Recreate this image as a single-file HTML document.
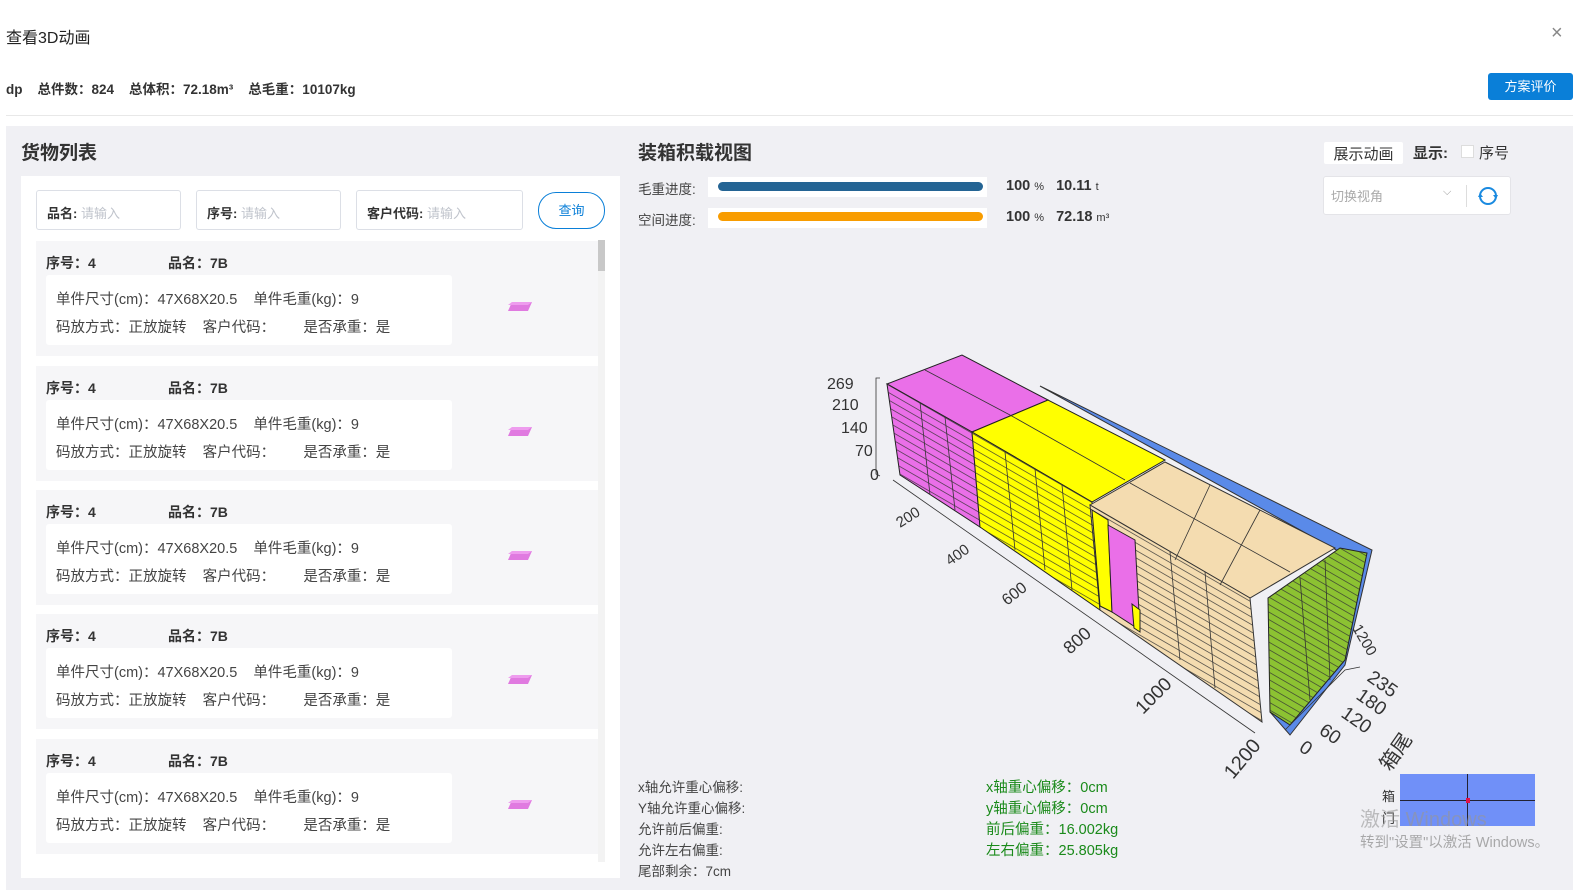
<!DOCTYPE html>
<html><head><meta charset="utf-8"><style>
*{margin:0;padding:0;box-sizing:border-box}
body{width:1573px;height:894px;background:#fff;font-family:"Liberation Sans","Noto Sans CJK SC",sans-serif;color:#333;position:relative;overflow:hidden}
.a{position:absolute;white-space:nowrap}
.b{font-weight:bold}
.inp{position:absolute;top:190px;height:40px;border:1px solid #dcdfe6;border-radius:3px;background:#fff;font-size:13px;font-weight:bold;padding:12px 0 0 10px;color:#333}
.inp span{color:#c0c4cc;font-weight:normal}
.item{position:absolute;left:36px;width:562px;height:115px;background:#f6f6f8}
.item .h{position:absolute;top:12px;font-size:14px;font-weight:bold;color:#333}
.item .w{position:absolute;left:10px;top:34px;width:406px;height:70px;background:#fff;border-radius:3px;font-size:14.5px;color:#444}
.item .w div{position:absolute;left:10px}
.item svg{position:absolute;left:472px;top:58px}
.lab{font-size:13.5px;color:#444}
.grn{font-size:14.5px;color:#1a8a1a}
</style></head><body>
<div class="a" style="left:6px;top:24px;font-size:16px;color:#222">查看3D动画</div>
<div class="a" style="left:1551px;top:22px;font-size:20px;color:#888">×</div>
<div class="a b" style="left:6px;top:78px;font-size:13.5px;color:#333">dp&nbsp;&nbsp;&nbsp;&nbsp;总件数：824&nbsp;&nbsp;&nbsp;&nbsp;总体积：72.18m³&nbsp;&nbsp;&nbsp;&nbsp;总毛重：10107kg</div>
<div class="a" style="left:1488px;top:73px;width:85px;height:27px;background:#0a7fd8;border-radius:3px;color:#fff;font-size:13px;text-align:center;line-height:27px">方案评价</div>
<div class="a" style="left:6px;top:115px;width:1567px;height:1px;background:#e8e8e8"></div>
<div class="a" style="left:6px;top:126px;width:1567px;height:764px;background:#f0f0f4"></div>
<div class="a b" style="left:21px;top:138px;font-size:19px;color:#333">货物列表</div>
<div class="a" style="left:21px;top:176px;width:599px;height:702px;background:#fff"></div>
<div class="inp" style="left:36px;width:145px">品名: <span>请输入</span></div>
<div class="inp" style="left:196px;width:145px">序号: <span>请输入</span></div>
<div class="inp" style="left:356px;width:167px">客户代码: <span>请输入</span></div>
<div class="a" style="left:538px;top:192px;width:67px;height:37px;border:1px solid #0a7fd8;border-radius:18px;color:#0a7fd8;font-size:13px;text-align:center;line-height:35px">查询</div>
<div class="a" style="left:598px;top:240px;width:7px;height:622px;background:#f3f3f3"></div>
<div class="a" style="left:598px;top:240px;width:7px;height:31px;background:#c8c8c8"></div>
<div class="item" style="top:241px"><div class="h" style="left:10px">序号：4</div><div class="h" style="left:132px">品名：7B</div><div class="w"><div style="top:13px">单件尺寸(cm)：47X68X20.5&nbsp;&nbsp;&nbsp;&nbsp;单件毛重(kg)：9</div><div style="top:41px">码放方式：正放旋转&nbsp;&nbsp;&nbsp;&nbsp;客户代码：&nbsp;&nbsp;&nbsp;&nbsp;&nbsp;&nbsp;&nbsp;是否承重：是</div></div><svg width="24" height="14"><polygon points="4,3 24,3 20,12 0,12" fill="#e07ae0"/><polygon points="0,6 20,6 24,3 4,3" fill="#ee9cee"/></svg></div>
<div class="item" style="top:366px"><div class="h" style="left:10px">序号：4</div><div class="h" style="left:132px">品名：7B</div><div class="w"><div style="top:13px">单件尺寸(cm)：47X68X20.5&nbsp;&nbsp;&nbsp;&nbsp;单件毛重(kg)：9</div><div style="top:41px">码放方式：正放旋转&nbsp;&nbsp;&nbsp;&nbsp;客户代码：&nbsp;&nbsp;&nbsp;&nbsp;&nbsp;&nbsp;&nbsp;是否承重：是</div></div><svg width="24" height="14"><polygon points="4,3 24,3 20,12 0,12" fill="#e07ae0"/><polygon points="0,6 20,6 24,3 4,3" fill="#ee9cee"/></svg></div>
<div class="item" style="top:490px"><div class="h" style="left:10px">序号：4</div><div class="h" style="left:132px">品名：7B</div><div class="w"><div style="top:13px">单件尺寸(cm)：47X68X20.5&nbsp;&nbsp;&nbsp;&nbsp;单件毛重(kg)：9</div><div style="top:41px">码放方式：正放旋转&nbsp;&nbsp;&nbsp;&nbsp;客户代码：&nbsp;&nbsp;&nbsp;&nbsp;&nbsp;&nbsp;&nbsp;是否承重：是</div></div><svg width="24" height="14"><polygon points="4,3 24,3 20,12 0,12" fill="#e07ae0"/><polygon points="0,6 20,6 24,3 4,3" fill="#ee9cee"/></svg></div>
<div class="item" style="top:614px"><div class="h" style="left:10px">序号：4</div><div class="h" style="left:132px">品名：7B</div><div class="w"><div style="top:13px">单件尺寸(cm)：47X68X20.5&nbsp;&nbsp;&nbsp;&nbsp;单件毛重(kg)：9</div><div style="top:41px">码放方式：正放旋转&nbsp;&nbsp;&nbsp;&nbsp;客户代码：&nbsp;&nbsp;&nbsp;&nbsp;&nbsp;&nbsp;&nbsp;是否承重：是</div></div><svg width="24" height="14"><polygon points="4,3 24,3 20,12 0,12" fill="#e07ae0"/><polygon points="0,6 20,6 24,3 4,3" fill="#ee9cee"/></svg></div>
<div class="item" style="top:739px"><div class="h" style="left:10px">序号：4</div><div class="h" style="left:132px">品名：7B</div><div class="w"><div style="top:13px">单件尺寸(cm)：47X68X20.5&nbsp;&nbsp;&nbsp;&nbsp;单件毛重(kg)：9</div><div style="top:41px">码放方式：正放旋转&nbsp;&nbsp;&nbsp;&nbsp;客户代码：&nbsp;&nbsp;&nbsp;&nbsp;&nbsp;&nbsp;&nbsp;是否承重：是</div></div><svg width="24" height="14"><polygon points="4,3 24,3 20,12 0,12" fill="#e07ae0"/><polygon points="0,6 20,6 24,3 4,3" fill="#ee9cee"/></svg></div>

<div class="a b" style="left:638px;top:138px;font-size:19px;color:#333">装箱积载视图</div>
<div class="a lab" style="left:638px;top:178px">毛重进度:</div>
<div class="a" style="left:708px;top:177px;width:279px;height:20px;background:#fff"></div>
<div class="a" style="left:718px;top:182px;width:265px;height:9px;background:#246494;border-radius:5px"></div>
<div class="a b" style="left:1006px;top:178px;font-size:14.5px">100 <span style="font-weight:normal;font-size:11px">%</span>&nbsp;&nbsp;&nbsp;10.11 <span style="font-weight:normal;font-size:11px">t</span></div>
<div class="a lab" style="left:638px;top:209px">空间进度:</div>
<div class="a" style="left:708px;top:208px;width:279px;height:20px;background:#fff"></div>
<div class="a" style="left:718px;top:212px;width:265px;height:9px;background:#f89c00;border-radius:5px"></div>
<div class="a b" style="left:1006px;top:209px;font-size:14.5px">100 <span style="font-weight:normal;font-size:11px">%</span>&nbsp;&nbsp;&nbsp;72.18 <span style="font-weight:normal;font-size:11px">m³</span></div>
<div class="a" style="left:1324px;top:142px;width:79px;height:22px;background:#fff;border-radius:2px;font-size:15px;text-align:center;line-height:26px;color:#333">展示动画</div>
<div class="a b" style="left:1413px;top:142px;font-size:15px">显示:</div>
<div class="a" style="left:1461px;top:145px;width:13px;height:13px;border:1px solid #ddd;background:#fff"></div>
<div class="a" style="left:1479px;top:142px;font-size:15px">序号</div>
<div class="a" style="left:1323px;top:176px;width:188px;height:39px;background:#fff;border:1px solid #e4e4e8;border-radius:3px"></div>
<div class="a" style="left:1331px;top:186px;font-size:13px;color:#aaa">切换视角</div>
<div class="a" style="left:1443px;top:186px;font-size:11px;color:#999">⌵</div>
<div class="a" style="left:1466px;top:185px;width:1px;height:22px;background:#ddd"></div>
<svg class="a" style="left:1477px;top:185px" width="22" height="22"><circle cx="11" cy="11" r="8" fill="none" stroke="#1a8ae0" stroke-width="2"/><polygon points="3,8 6,12 1,12" fill="#1a8ae0"/><polygon points="19,14 16,10 21,10" fill="#1a8ae0"/></svg>

<svg class="a" style="left:0;top:0" width="1573" height="894">
<defs>
<pattern id="hs" width="20" height="7.5" patternUnits="userSpaceOnUse" patternTransform="skewY(30)"><line x1="0" y1="7" x2="20" y2="7" stroke="#333" stroke-width="0.8"/></pattern>
</defs>
<polygon points="1040,386 1372,550 1345,665 1290,735 1270,712 1340,552" fill="#5a8ae8" stroke="#333" stroke-width="1"/>
<!-- magenta -->
<polygon points="887,384 962,355 1048,400 972,432" fill="#ea6fe8" stroke="#222"/>
<polygon points="887,384 972,432 980,527 900,475" fill="#ea6fe8" stroke="#222"/>
<polygon points="887,384 972,432 980,527 900,475" fill="url(#hs)"/>
<!-- yellow -->
<polygon points="972,432 1048,400 1165,460 1092,502" fill="#ffff00" stroke="#222"/>
<polygon points="972,432 1092,502 1100,610 980,527" fill="#ffff00" stroke="#222"/>
<polygon points="972,432 1092,502 1100,610 980,527" fill="url(#hs)"/>
<!-- tan -->
<polygon points="1090,505 1165,462 1335,548 1250,598" fill="#f4dcb0" stroke="#333"/>
<polygon points="1090,505 1250,598 1262,722 1100,610" fill="#f4dcb0" stroke="#333"/>
<polygon points="1090,505 1250,598 1262,722 1100,610" fill="url(#hs)"/>
<polygon points="1092,510 1108,520 1112,612 1100,606" fill="#ffff00" stroke="#222"/>
<polygon points="1108,525 1135,540 1140,630 1112,612" fill="#ea6fe8" stroke="#222"/>
<polygon points="1132,604 1140,610 1140,632 1134,628" fill="#ffff00" stroke="#222"/>
<!-- green -->
<polygon points="1268,598 1340,548 1367,553 1345,660 1290,725 1270,712" fill="#8cc232" stroke="#222"/>
<polygon points="1268,598 1340,548 1367,553 1345,660 1290,725 1270,712" fill="url(#hs)"/>
<g stroke="#333" stroke-width="0.8" fill="none">
<line x1="920" y1="402" x2="930" y2="495"/><line x1="945" y1="417" x2="955" y2="510"/>
<line x1="1005" y1="452" x2="1015" y2="550"/><line x1="1035" y1="469" x2="1045" y2="570"/><line x1="1062" y1="485" x2="1072" y2="590"/>
<line x1="1170" y1="552" x2="1180" y2="660"/><line x1="1205" y1="572" x2="1215" y2="688"/>
<line x1="1300" y1="578" x2="1310" y2="700"/><line x1="1325" y1="560" x2="1330" y2="680"/>
<line x1="925" y1="370" x2="1010" y2="415"/><line x1="1010" y1="415" x2="1125" y2="480"/><line x1="1130" y1="483" x2="1290" y2="572"/>
<line x1="1210" y1="485" x2="1175" y2="560"/><line x1="1260" y1="510" x2="1220" y2="585"/>
<polyline points="880,378 876,378 876,474 880,476"/>
<polyline points="893,480 1255,733"/>
<polyline points="1285,730 1345,670 1360,667"/>
</g>
<g font-family="Liberation Sans" font-size="16" fill="#333">
<text x="827" y="389">269</text><text x="832" y="410">210</text><text x="841" y="433">140</text><text x="855" y="456">70</text><text x="870" y="480">0</text>
<text transform="translate(900,528) rotate(-32)" font-size="15">200</text>
<text transform="translate(950,566) rotate(-35)" font-size="15">400</text>
<text transform="translate(1007,606) rotate(-38)" font-size="16">600</text>
<text transform="translate(1070,655) rotate(-42)" font-size="18">800</text>
<text transform="translate(1143,715) rotate(-45)" font-size="19">1000</text>
<text transform="translate(1233,780) rotate(-50)" font-size="20">1200</text>
<text transform="translate(1352,628) rotate(60)" font-size="15">1200</text>
<text transform="translate(1366,680) rotate(35)" font-size="19">235</text>
<text transform="translate(1355,698) rotate(35)" font-size="19">180</text>
<text transform="translate(1340,716) rotate(35)" font-size="19">120</text>
<text transform="translate(1318,733) rotate(35)" font-size="19">60</text>
<text transform="translate(1298,750) rotate(35)" font-size="19">0</text>
<text transform="translate(1390,772) rotate(-55)" font-size="20" font-family="Noto Sans CJK SC">箱尾</text>
</g>
</svg>

<div class="a lab" style="left:638px;top:776px">x轴允许重心偏移:</div>
<div class="a lab" style="left:638px;top:797px">Y轴允许重心偏移:</div>
<div class="a lab" style="left:638px;top:818px">允许前后偏重:</div>
<div class="a lab" style="left:638px;top:839px">允许左右偏重:</div>
<div class="a lab" style="left:638px;top:860px">尾部剩余：7cm</div>
<div class="a grn" style="left:986px;top:776px">x轴重心偏移：0cm</div>
<div class="a grn" style="left:986px;top:797px">y轴重心偏移：0cm</div>
<div class="a grn" style="left:986px;top:818px">前后偏重：16.002kg</div>
<div class="a grn" style="left:986px;top:839px">左右偏重：25.805kg</div>
<div class="a" style="left:1400px;top:774px;width:135px;height:52px;background:#7090f8"></div>
<div class="a" style="left:1467px;top:774px;width:1px;height:52px;background:#223"></div>
<div class="a" style="left:1400px;top:800px;width:135px;height:1px;background:#223"></div>
<div class="a" style="left:1466px;top:798px;width:4px;height:5px;background:#e0104a"></div>
<div class="a" style="left:1382px;top:786px;font-size:13px">箱</div>
<div class="a" style="left:1382px;top:808px;font-size:13px">门</div>
<div class="a" style="left:1360px;top:803px;font-size:20px;color:rgba(150,150,150,0.6)">激活 Windows</div>
<div class="a" style="left:1360px;top:831px;font-size:14.5px;color:rgba(150,150,150,0.8)">转到"设置"以激活 Windows。</div>
</body></html>
